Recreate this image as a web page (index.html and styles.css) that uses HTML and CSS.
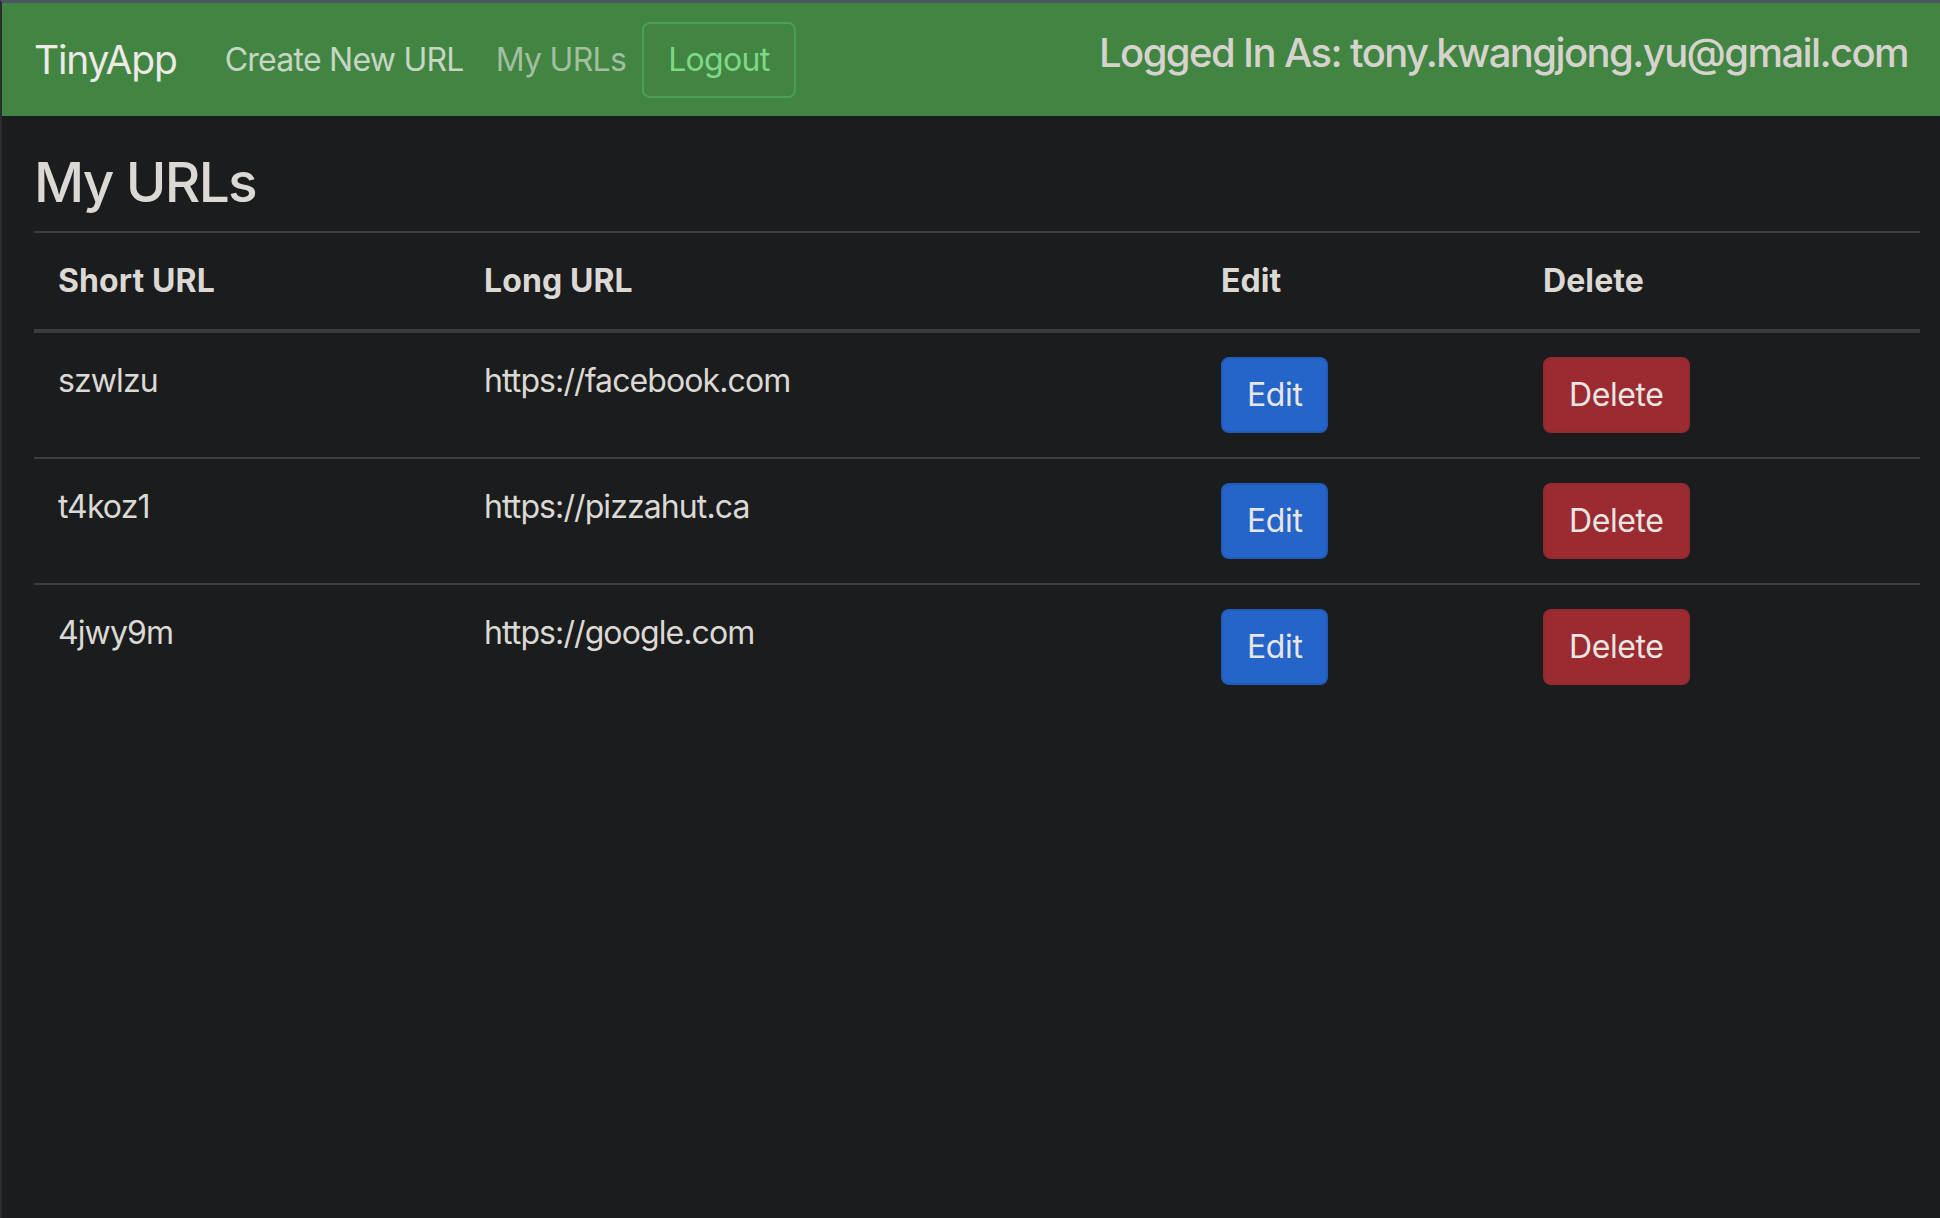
FILE: index.html
```html
<!DOCTYPE html>
<html lang="en">
<head>
<meta charset="utf-8">
<title>TinyApp - My URLs</title>
<link rel="stylesheet" href="styles.css">
</head>
<body>
<div class="page">
  <nav class="navbar">
    <a class="brand" href="#">TinyApp</a>
    <a class="nav-link light" href="#">Create New URL</a>
    <a class="nav-link dim" href="#">My URLs</a>
    <button class="btn btn-outline">Logout</button>
    <h5 class="logged">Logged In As: tony.kwangjong.yu@gmail.com</h5>
  </nav>
  <main class="content">
    <h1 class="title">My URLs</h1>
    <table class="table">
      <thead>
        <tr>
          <th class="c-short">Short URL</th>
          <th class="c-long">Long URL</th>
          <th class="c-edit">Edit</th>
          <th class="c-del">Delete</th>
        </tr>
      </thead>
      <tbody>
        <tr>
          <td>szwlzu</td>
          <td>https://facebook.com</td>
          <td><button class="btn btn-primary">Edit</button></td>
          <td><button class="btn btn-danger">Delete</button></td>
        </tr>
        <tr>
          <td>t4koz1</td>
          <td>https://pizzahut.ca</td>
          <td><button class="btn btn-primary">Edit</button></td>
          <td><button class="btn btn-danger">Delete</button></td>
        </tr>
        <tr>
          <td>4jwy9m</td>
          <td>https://google.com</td>
          <td><button class="btn btn-primary">Edit</button></td>
          <td><button class="btn btn-danger">Delete</button></td>
        </tr>
      </tbody>
    </table>
  </main>
</div>
</body>
</html>
```
FILE: styles.css
```css
* { box-sizing: border-box; }
html, body {
  margin: 0;
  padding: 0;
  background: #1b1c1e;
}
body {
  font-family: Inter, "Noto Sans", "Liberation Sans", sans-serif;
  color: #dcd9d4;
  font-size: 32px;
  line-height: 48px;
}
.page {
  min-height: 1218px;
  border-top: 3px solid #4b5763;
  border-left: 2px solid #2a2c2f;
  background: #1b1c1e;
}
.navbar {
  display: flex;
  align-items: center;
  background: #428442;
  padding: 16px 32px;
  height: 113px;
}
.brand {
  font-size: 39px;
  line-height: 60px;
  padding: 10px 0;
  margin-right: 32px;
  color: #eceae6;
  text-decoration: none;
  letter-spacing: -1.2px;
}
.nav-link {
  padding: 16px;
  font-size: 32px;
  line-height: 48px;
  text-decoration: none;
  letter-spacing: -0.75px;
}
.nav-link.light { color: #c6d6c4; }
.nav-link.dim { color: #a3bfa1; letter-spacing: -0.7px; }
.btn {
  font-family: inherit;
  font-size: 32px;
  line-height: 48px;
  padding: 12px 24px;
  border: 2px solid transparent;
  border-radius: 8px;
  color: #e8e6e3;
  background: transparent;
  letter-spacing: -0.4px;
  cursor: pointer;
}
.btn-outline {
  color: #7ed888;
  border-color: #4c9f57;
  letter-spacing: -0.7px;
}
.btn-primary {
  background: #2564c8;
  border-color: #215cba;
}
.btn-danger {
  background: #9b2b31;
  border-color: #932a2f;
}
.logged {
  margin: 0 0 14px auto;
  font-size: 40px;
  line-height: 48px;
  font-weight: 500;
  color: #d6d3ce;
  letter-spacing: -1.6px;
}
.content {
  padding: 0 20px 0 32px;
}
.title {
  font-size: 55px;
  line-height: 66px;
  font-weight: 500;
  margin: 33px 0 16px;
  letter-spacing: -1.7px;
}
.table {
  width: 100%;
  border-collapse: collapse;
  table-layout: fixed;
}
.table th, .table td {
  padding: 24px;
  border-top: 2px solid #3a3d41;
  text-align: left;
  vertical-align: top;
  letter-spacing: -0.9px;
}
.table thead th {
  vertical-align: bottom;
  border-bottom: 4px solid #3a3d40;
  font-weight: 700;
  letter-spacing: 0.1px;
}
.table td .btn {
  letter-spacing: -0.4px;
}
.c-short { width: 426px; }
.c-long { width: 737px; }
.c-edit { width: 322px; }
.c-del { width: auto; }
```
